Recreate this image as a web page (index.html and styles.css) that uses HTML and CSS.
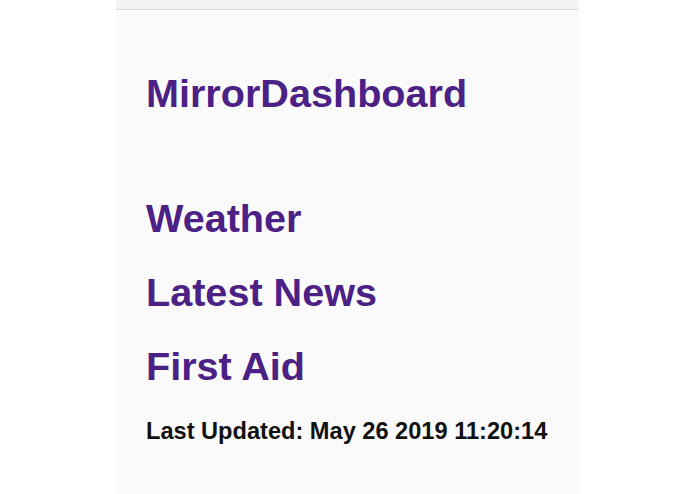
FILE: index.html
```html
<!DOCTYPE html>
<html lang="en">

<head>
    <meta charset="UTF-8">
    <meta name="viewport" content="width=device-width, initial-scale=1.0">
    <title>MirrorDashboard</title>
    <link rel="stylesheet" href="styles.css">
</head>

<body>
    <div class="app">
        <div class="topbar"></div>
        <div class="content">
            <h1 class="title">MirrorDashboard</h1>
            <!-- 菜单 -->
            <nav class="menu">
                <a href="#weather">Weather</a>
                <a href="#news">Latest News</a>
                <a href="#firstaid">First Aid</a>
            </nav>
            <p class="updated">Last Updated: May 26 2019 11:20:14</p>
        </div>
    </div>
</body>

</html>
```

FILE: styles.css
```css
body {
    margin: 0;
    padding: 0;
    background-color: #fff;
    font-family: "Liberation Sans", Arial, sans-serif;
}

.app {
    width: 463px;
    min-height: 100vh;
    margin: 0 auto;
    background-color: #fafafa;
}

.topbar {
    height: 9px;
    background-color: #f4f4f4;
    border-bottom: 1px solid #dadada;
}

.content {
    padding: 61px 30px 0;
}

.title {
    margin: 0;
    font-size: 39.6px;
    font-weight: bold;
    color: #4b2186;
}

.menu {
    display: flex;
    flex-direction: column;
    gap: 29px;
    margin-top: 80px;
}

.menu a {
    font-size: 39.6px;
    font-weight: bold;
    color: #4b2186;
    text-decoration: none;
}

.updated {
    margin: 29px 0 0;
    font-size: 23.6px;
    font-weight: bold;
    color: #111;
}
```
